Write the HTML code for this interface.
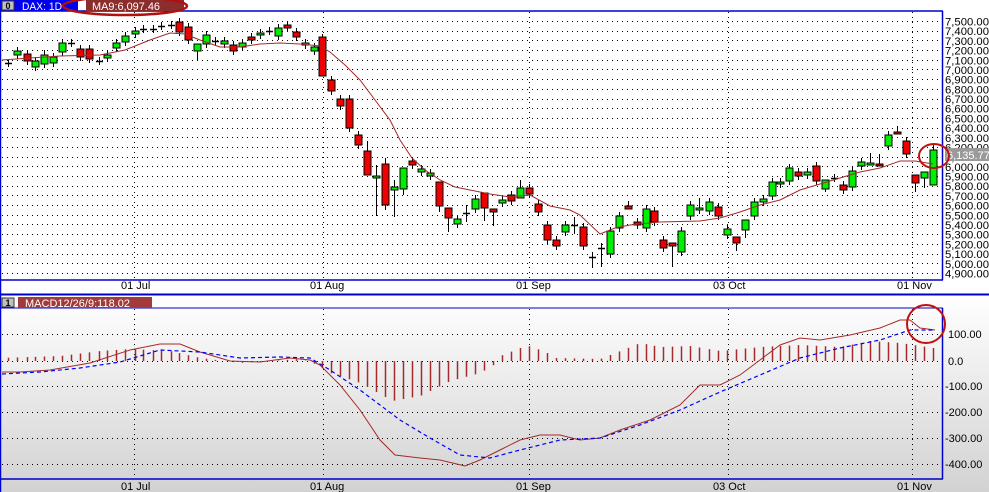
<!DOCTYPE html>
<html><head><meta charset="utf-8">
<style>
html,body{margin:0;padding:0;background:#fff;width:989px;height:492px;overflow:hidden;font-family:"Liberation Sans",sans-serif}
svg{display:block}
</style></head><body>
<svg id="s" width="989" height="492" xmlns="http://www.w3.org/2000/svg">
<defs>
<linearGradient id="g" x1="0" y1="0" x2="0" y2="1">
<stop offset="0" stop-color="#ffffff"/><stop offset="1" stop-color="#d2d2d2"/>
</linearGradient>
</defs>
<rect x="0" y="0" width="989" height="492" fill="#fff"/>
<rect x="0" y="296" width="989" height="196" fill="url(#g)"/>
<g id="grid" stroke="#000" stroke-width="1" stroke-dasharray="1,4"></g>
<g id="bars"></g>
<g id="cand"></g>
<g id="lines"></g>
<line x1="0" y1="11" x2="943" y2="11" stroke="#0000cc" stroke-width="1.5"/>
<line x1="942.5" y1="11" x2="942.5" y2="280" stroke="#0000cc" stroke-width="1.5"/>
<line x1="0" y1="280" x2="943" y2="280" stroke="#0000cc" stroke-width="1.5"/>
<line x1="0.5" y1="0" x2="0.5" y2="492" stroke="#0000cc" stroke-width="1.5"/>
<line x1="0" y1="294.5" x2="989" y2="294.5" stroke="#0000cc" stroke-width="2"/>
<line x1="0" y1="308" x2="943" y2="308" stroke="#0000cc" stroke-width="1"/>
<line x1="942.5" y1="308" x2="942.5" y2="479" stroke="#0000cc" stroke-width="1.5"/>
<line x1="0" y1="479" x2="943" y2="479" stroke="#0000cc" stroke-width="1.5"/>
<rect x="0" y="0" width="78" height="11" fill="#0000ee"/>
<rect x="2" y="1" width="12" height="9" fill="#c0c0c0" stroke="#333" stroke-width="1"/>
<text x="8" y="9" font-size="9" font-weight="bold" text-anchor="middle" fill="#000">0</text>
<text x="22" y="10" font-size="11" fill="#fff" textLength="40" lengthAdjust="spacingAndGlyphs">DAX: 1D</text>
<rect x="86" y="0" width="98" height="11" fill="#8b2d2d"/>
<text x="92" y="10" font-size="11" fill="#fff" textLength="68" lengthAdjust="spacingAndGlyphs">MA9:6,097.46</text>
<ellipse cx="125" cy="6" rx="62" ry="9" fill="none" stroke="#b01010" stroke-width="2.5"/>
<rect x="2" y="298" width="12" height="9" fill="#c0c0c0" stroke="#333" stroke-width="1"/>
<text x="8" y="306" font-size="9" font-weight="bold" text-anchor="middle" fill="#000">1</text>
<rect x="18" y="297" width="134" height="11" fill="#a33a3a"/>
<text x="25" y="307" font-size="11" fill="#fff" textLength="105" lengthAdjust="spacingAndGlyphs">MACD12/26/9:118.02</text>
<g id="labels" font-size="11" fill="#000"></g>
<rect x="945" y="148" width="44" height="13" fill="#9a9a9a"/>
<text x="947" y="159" font-size="11" fill="#fff">6,135.77</text>
<ellipse cx="934" cy="156" rx="15" ry="12" fill="none" stroke="#c01010" stroke-width="2"/>
<circle cx="926" cy="324" r="19" fill="none" stroke="#c01010" stroke-width="2"/>
</svg>
<script>
var NS="http://www.w3.org/2000/svg";
function el(p,t,a,txt){var e=document.createElementNS(NS,t);for(var k in a)e.setAttribute(k,a[k]);if(txt)e.textContent=txt;document.getElementById(p).appendChild(e);return e;}
var vx=[134,323,529,728,912];
vx.forEach(function(x){el('grid','line',{x1:x+.5,y1:12,x2:x+.5,y2:280});el('grid','line',{x1:x+.5,y1:309,x2:x+.5,y2:479});});
for(var p=7500;p>=4900;p-=100){var y=21+(7500-p)*0.0969;
el('grid','line',{x1:2,y1:Math.round(y)+.5,x2:942,y2:Math.round(y)+.5});
el('labels','text',{x:945,y:y+4.5,'textLength':44,'lengthAdjust':'spacingAndGlyphs'},(p/1000|0)+','+String(p%1000).padStart(3,'0')+'.00');}
[[100,334],[0,361],[-100,386],[-200,412],[-300,438],[-400,464]].forEach(function(a){
el('grid','line',{x1:2,y1:a[1]+.5,x2:942,y2:a[1]+.5});
var t=a[0]==0?'0.0':(a[0]<0?'-':'')+Math.abs(a[0])+'.00';
el('labels','text',{x:a[0]<0?945:948,y:a[1]+4},t);});
[['01 Jul',121],['01 Aug',310],['01 Sep',516],['03 Oct',713],['01 Nov',897]].forEach(function(d){
el('labels','text',{x:d[1],y:289},d[0]);el('labels','text',{x:d[1],y:490},d[0]);});
var C=[[8,63,63,'c'],[17,51,55,'g'],[27,54,61,'r'],[35,61,67,'g'],[44,55,64,'g'],[53,57,63,'g'],[62,43,52,'g'],[71,43,43,'c'],[80,49,57,'r'],[89,49,59,'r'],[99,61,61,'c'],[107,55,58,'g'],[116,43,48,'g'],[125,36,42,'g'],[135,31,34,'g'],[143,29,29,'c'],[153,29,29,'c'],[161,26,26,'c'],[171,25,25,'c'],[179,22,32,'r'],
[188,27,40,'r'],[197,44,51,'g'],[206,35,44,'g'],[215,41,41,'c'],[224,41,44,'g'],[233,45,51,'r'],[242,43,47,'g'],[251,37,40,'r'],[260,33,35,'g'],[269,31,31,'c'],[278,28,36,'g'],[287,25,28,'r'],[296,32,37,'r'],[305,43,45,'g'],[314,47,51,'g'],[322,37,76,'r'],[331,80,91,'r'],[340,99,106,'r'],[349,99,128,'r'],[358,135,145,'r'],[367,151,175,'r'],[376,176,178,'g'],[385,164,205,'r'],[394,187,190,'g'],[403,168,189,'g'],[412,161,165,'r'],[421,169,172,'g'],[430,173,176,'g'],[439,182,206,'r'],[448,208,218,'r'],[457,219,224,'g'],[466,213,213,'c'],[475,199,209,'g'],[484,193,208,'r'],[493,209,212,'r'],[502,200,203,'g'],[511,195,201,'r'],[520,188,198,'g'],[529,188,194,'r'],[538,204,212,'r'],[547,225,240,'r'],[556,240,246,'r'],[565,225,232,'g'],[574,225,225,'c'],[583,227,246,'r'],[592,257,257,'c'],[601,248,248,'c'],[610,231,254,'g'],[619,216,228,'g'],[628,206,209,'r'],[637,222,225,'r'],[646,209,228,'g'],[654,211,222,'r'],[663,240,248,'r'],[672,243,246,'r'],[681,231,252,'g'],[690,205,216,'g'],[699,208,210,'g'],[709,202,211,'g'],[718,207,216,'r'],[727,229,235,'g'],[736,237,243,'r'],[745,220,230,'g'],[754,202,216,'g'],[763,199,202,'g'],[772,182,196,'g'],[780,182,184,'g'],[789,168,181,'g'],[798,172,176,'r'],[807,172,175,'g'],[816,166,181,'r'],[825,180,189,'g'],[834,178,178,'c'],[843,185,190,'r'],[852,171,187,'g'],[861,162,166,'g'],[870,163,165,'g'],[879,164,166,'r'],[888,135,146,'g'],[897,132,134,'r'],[906,141,154,'r'],[915,175,183,'r'],[924,172,178,'g'],[933,150,185,'g']];
var wk={197:[44,61],367:[141,175],376:[165,216],385:[158,210],394:[180,217],403:[168,195],439:[182,212],448:[208,232],466:[205,222],484:[193,221],493:[209,226],520:[180,198],574:[217,234],592:[252,268],601:[243,267],628:[201,209],672:[243,267],699:[198,214],736:[237,251],745:[220,238],825:[180,192],870:[153,165],879:[154,166],897:[126,134],915:[175,192],924:[172,188],933:[145,185],322:[34,76],44:[50,68],36:[58,70]};
C.forEach(function(c){var x=c[0],t=c[1],b=c[2];var w=wk[x]||[t-4,b+4];
el('cand','line',{x1:x+.5,y1:w[0],x2:x+.5,y2:w[1],stroke:'#000','stroke-width':1});
if(c[3]=='c'){el('cand','line',{x1:x-3,y1:t+.5,x2:x+4,y2:t+.5,stroke:'#000','stroke-width':1.5});}
else el('cand','rect',{x:x-3,y:t,width:7,height:Math.max(b-t,2),fill:c[3]=='g'?'#00ee00':'#ee0000',stroke:'#000','stroke-width':1});});
function pl(pts,col,dash,w){el('lines','polyline',{points:pts.map(function(p){return p.join(',')}).join(' '),fill:'none',stroke:col,'stroke-width':w||1,'stroke-dasharray':dash||''});}
pl([[2,60],[30,58],[60,56],[100,55],[125,50],[135,46],[150,40],[170,33],[185,34],[200,40],[220,47],[240,47],[260,44],[280,43],[300,44],[320,46],[330,52],[345,65],[360,80],[375,100],[390,120],[400,140],[412,158],[425,170],[440,180],[455,187],[470,190],[490,194],[510,197],[530,195],[550,206],[570,210],[580,215],[600,234],[615,228],[630,225],[660,222],[700,221],[720,218],[740,212],[760,205],[780,200],[800,190],[820,184],[840,178],[860,172],[880,168],[900,161],[915,161],[933,164]],'#a52a2a');
var H=[[0,3],[60,5],[100,10],[130,12],[170,10],[200,3],[240,-2],[300,2],[315,-3],[330,-12],[360,-22],[392,-40],[420,-35],[450,-20],[480,-12],[495,-3],[500,5],[520,13],[530,15],[547,8],[556,3],[600,2],[615,8],[640,18],[660,14],[690,15],[720,10],[760,14],[800,16],[840,14],[870,20],[900,18],[933,13]];
function hv(x){for(var i=1;i<H.length;i++){if(x<=H[i][0]){var a=H[i-1],b=H[i];return a[1]+(b[1]-a[1])*(x-a[0])/(b[0]-a[0]);}}return 13;}
C.forEach(function(c){var h=hv(c[0]);el('bars','line',{x1:c[0]+.5,y1:361,x2:c[0]+.5,y2:361-h,stroke:'#a52a2a','stroke-width':1.5});});
pl([[2,372],[20,372],[50,370],[90,363],[130,350],[160,344],[180,344],[200,352],[230,361],[260,362],[290,358],[310,360],[320,365],[340,385],[360,410],[380,440],[395,455],[420,458],[440,460],[465,466],[480,460],[500,450],[520,440],[540,435],[560,435],[580,440],[600,438],[620,430],[650,420],[680,405],[700,385],[720,385],[740,375],[760,360],[780,345],[800,338],[820,340],[850,335],[880,328],[900,320],[910,320],[920,328],[935,330]],'#a52a2a');
pl([[2,374],[40,372],[80,368],[120,362],[160,350],[200,352],[240,358],[280,357],[310,358],[330,370],[360,390],[380,405],[400,420],[430,438],[460,455],[490,458],[520,450],[560,440],[600,438],[640,425],[680,410],[720,392],[760,375],[800,358],[840,348],[880,340],[910,330],[935,330]],'#0000ff','4,3',1.2);
</script>
</body></html>
